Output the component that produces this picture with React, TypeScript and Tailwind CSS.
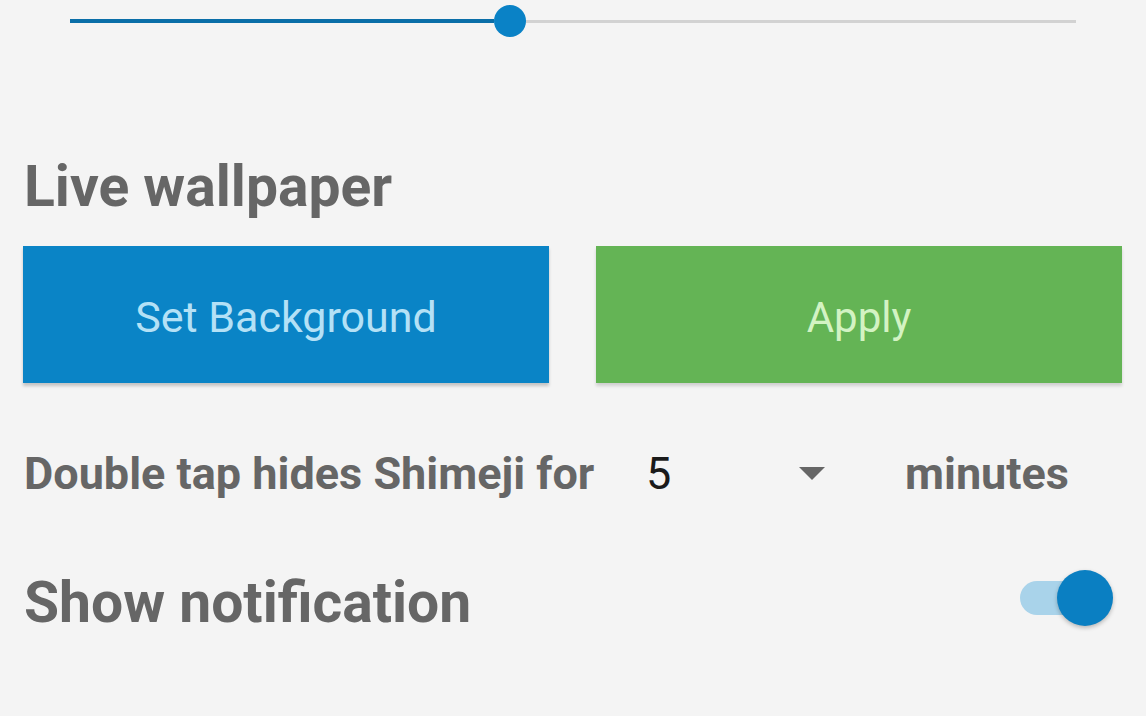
export default function App() {
  return (
    <div
      className="w-[1146px] h-[716px] overflow-hidden bg-[#f4f4f4] pt-[5px]"
      style={{ fontFamily: "Roboto, 'Liberation Sans', sans-serif" }}
    >
      {/* slider */}
      <div className="flex items-center h-[32px] pl-[70px] pr-[70px]">
        <div className="w-[424px] h-[4px] bg-[#0a6ea8]" />
        <div className="w-[32px] h-[32px] rounded-full bg-[#0a82c6] shrink-0" />
        <div className="flex-1 h-[3px] bg-[#d2d2d2]" />
      </div>

      <h2 className="mt-[121px] pl-[24px] text-[57px] leading-none font-bold text-[#666666]">
        Live wallpaper
      </h2>

      <div className="mt-[31px] flex gap-[47px] pl-[23px] pr-[24px]">
        <button className="flex-1 h-[137px] pt-[6px] bg-[#0a84c6] text-[#b4e1f6] text-[43px] shadow-[0_3px_3px_rgba(0,0,0,0.2)]">
          Set Background
        </button>
        <button className="flex-1 h-[137px] pt-[6px] bg-[#64b455] text-[#d3f3c3] text-[42px] shadow-[0_3px_3px_rgba(0,0,0,0.15)]">
          Apply
        </button>
      </div>

      <div className="mt-[68px] flex items-center pl-[24px] h-[44px] text-[45px] leading-none">
        <span className="font-bold text-[#666666] w-[622px]">
          Double tap hides Shimeji for
        </span>
        <span className="text-[#1a1a1a] w-[153px]">5</span>
        <svg width="26" height="13" viewBox="0 0 26 13" className="shrink-0">
          <path d="M0 0 H26 L13 13 Z" fill="#666666" />
        </svg>
        <span className="ml-[80px] font-bold text-[#666666]">minutes</span>
      </div>

      <div className="mt-[75px] flex items-start justify-between pl-[24px] pr-[33px]">
        <span className="mt-[4px] text-[57px] leading-none font-bold text-[#666666]">
          Show notification
        </span>
        <div className="flex items-center h-[56px]">
          <div className="w-[70px] h-[34px] rounded-full bg-[#a9d3ea]" />
          <div className="w-[56px] h-[56px] -ml-[33px] rounded-full bg-[#0a7fc2] shadow-[0_2px_4px_rgba(0,0,0,0.25)]" />
        </div>
      </div>
    </div>
  );
}
